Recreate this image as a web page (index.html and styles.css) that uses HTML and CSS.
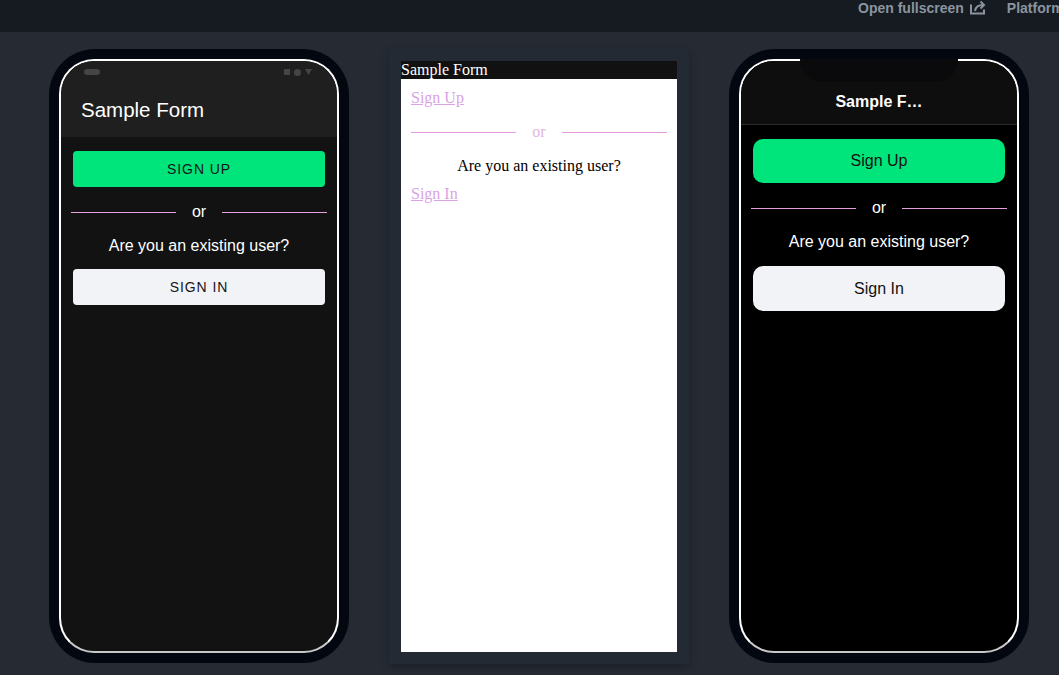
FILE: index.html
```html
<!DOCTYPE html>
<html>
<head>
<meta charset="utf-8">
<link rel="stylesheet" href="styles.css">
</head>
<body>
<div class="topbar">
  <span class="top-link">Open fullscreen</span>
  <svg class="share-icon" width="18" height="15" viewBox="0 0 18 15" fill="none" stroke="#8b949e" stroke-width="2">
    <path d="M2 4.5 V13.5 H15 V9.5"/>
    <path d="M6 11 C6.5 7 9 5 14 5"/>
    <path d="M11.5 1.5 L15 5 L11.5 8.5"/>
  </svg>
  <span class="top-link platform">Platform</span>
</div>

<div class="stage">
  <!-- Android phone -->
  <div class="phone">
    <div class="screen android">
      <div class="status">
        <span class="pill"></span>
        <span class="status-icons">
          <span class="sq"></span>
          <span class="dot"></span>
          <svg width="7" height="6" viewBox="0 0 7 6"><path d="M0 0 H7 L3.5 6 Z" fill="#454545"/></svg>
        </span>
      </div>
      <div class="appbar">Sample Form</div>
      <div class="content">
        <button class="btn btn-green">SIGN UP</button>
        <div class="divider"><span class="line"></span><span class="or">or</span><span class="line"></span></div>
        <p class="question">Are you an existing user?</p>
        <button class="btn btn-light">SIGN IN</button>
      </div>
    </div>
  </div>

  <!-- Web preview -->
  <div class="web-frame">
    <div class="web-screen">
      <div class="web-header">Sample Form</div>
      <div class="web-body">
        <a class="web-link" href="#">Sign Up</a>
        <div class="web-divider"><span class="line"></span><span class="or">or</span><span class="line"></span></div>
        <p class="web-question">Are you an existing user?</p>
        <a class="web-link web-signin" href="#">Sign In</a>
      </div>
    </div>
  </div>

  <!-- iOS phone -->
  <div class="phone">
    <div class="notch"></div>
    <div class="screen ios">
      <div class="ios-header">Sample F…</div>
      <div class="content ios-content">
        <button class="btn ios-btn btn-green">Sign Up</button>
        <div class="divider"><span class="line"></span><span class="or">or</span><span class="line"></span></div>
        <p class="question">Are you an existing user?</p>
        <button class="btn ios-btn btn-light ios-signin">Sign In</button>
      </div>
    </div>
  </div>
</div>
</body>
</html>
```

FILE: styles.css
```css
* { box-sizing: border-box; }

html, body {
  margin: 0;
  padding: 0;
  width: 1059px;
  height: 675px;
  overflow: hidden;
  background: #262a33;
  font-family: "Liberation Sans", Arial, sans-serif;
}

.topbar {
  height: 32px;
  background: #161b22;
  display: flex;
  align-items: flex-start;
  padding-left: 858px;
  white-space: nowrap;
  overflow: hidden;
}

.top-link {
  font-size: 14px;
  font-weight: bold;
  line-height: 16px;
  color: #8b949e;
}

.share-icon {
  margin-left: 5px;
  flex-shrink: 0;
}

.platform {
  margin-left: 20px;
}

.stage {
  display: flex;
  gap: 40px;
  padding: 17px 0 0 49px;
}

/* Phones */
.phone {
  position: relative;
  width: 300px;
  height: 614px;
  padding: 10px;
  background: #03070f;
  border-radius: 46px;
  flex-shrink: 0;
}

.screen {
  height: 100%;
  border: 2px solid #fff;
  border-bottom-color: #c8c8c8;
  border-radius: 35px;
  overflow: hidden;
  display: flex;
  flex-direction: column;
}

.android { background: #121212; }

.status {
  height: 22px;
  background: #1f1f1f;
  display: flex;
  align-items: center;
  justify-content: space-between;
  padding: 0 25px 0 23px;
}

.pill {
  width: 16px;
  height: 6px;
  border-radius: 3px;
  background: #454545;
}

.status-icons {
  display: flex;
  align-items: center;
  gap: 4px;
}

.sq {
  width: 6px;
  height: 6px;
  background: #454545;
}

.dot {
  width: 7px;
  height: 7px;
  border-radius: 50%;
  background: #454545;
}

.appbar {
  height: 54px;
  background: #1f1f1f;
  color: #fff;
  font-size: 20.5px;
  display: flex;
  align-items: center;
  padding-left: 20px;
}

.content {
  flex: 1;
  padding: 14px 12px;
}

.btn {
  display: block;
  width: 100%;
  height: 36px;
  border: 0;
  border-radius: 4px;
  font-family: "Liberation Sans", Arial, sans-serif;
  font-size: 14px;
  letter-spacing: 0.9px;
  color: #151515;
  padding: 0;
}

.btn-green { background: #00e47c; }
.btn-light { background: #f2f3f7; }

.divider {
  display: flex;
  align-items: center;
  height: 22px;
  margin: 14px -2px 0;
}

.divider .line,
.web-divider .line {
  flex: 1;
  height: 1px;
  background: #e59ee0;
}

.divider .or {
  width: 46px;
  text-align: center;
  color: #fff;
  font-size: 16px;
}

.question {
  margin: 14px 0 0;
  text-align: center;
  color: #fff;
  font-size: 16px;
  line-height: 18px;
}

.content .btn-light { margin-top: 14px; }

/* iOS */
.notch {
  position: absolute;
  left: 71px;
  top: 10px;
  width: 158px;
  height: 23px;
  background: #0a0a0c;
  border-radius: 0 0 22px 22px;
}

.ios { background: #000; }

.ios-header {
  background: #0e0e0e;
  border-bottom: 1px solid #2b2b2b;
  padding: 32px 0 13px;
  text-align: center;
  color: #fff;
  font-weight: bold;
  font-size: 16px;
  line-height: 18px;
}

.ios-btn {
  height: 44px;
  border-radius: 10px;
  font-size: 16px;
  letter-spacing: 0;
  color: #111;
}

.content .ios-signin { margin-top: 15px; height: 45px; }

/* Web preview */
.web-frame {
  width: 300px;
  height: 615px;
  padding: 12px;
  background: #232a33;
  box-shadow: 0 3px 8px rgba(0, 0, 0, 0.25);
  flex-shrink: 0;
}

.web-screen {
  height: 100%;
  background: #fff;
  font-family: "Liberation Serif", "Times New Roman", serif;
  font-size: 16px;
}

.web-header {
  background: #111;
  color: #fff;
  line-height: 18px;
}

.web-body {
  padding: 10px;
}

.web-link {
  display: block;
  width: max-content;
  color: #d9a3e6;
  text-decoration: underline;
  line-height: 18px;
}

.web-divider {
  display: flex;
  align-items: center;
  height: 18px;
  margin-top: 16px;
}

.web-divider .or {
  width: 46px;
  text-align: center;
  color: #e3b4e3;
}

.web-question {
  margin: 16px 0 0;
  text-align: center;
  color: #000;
  line-height: 18px;
}

.web-signin { margin-top: 10px; }
```
